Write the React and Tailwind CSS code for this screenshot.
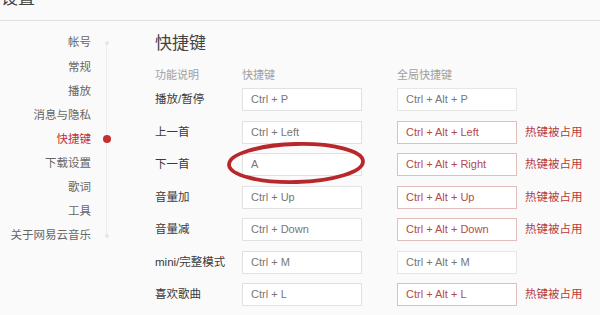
import React from 'react';

const navItems = ['帐号', '常规', '播放', '消息与隐私', '快捷键', '下载设置', '歌词', '工具', '关于网易云音乐'];

const rows = [
  { name: '播放/暂停', local: 'Ctrl + P', global: 'Ctrl + Alt + P', taken: false },
  { name: '上一首', local: 'Ctrl + Left', global: 'Ctrl + Alt + Left', taken: true },
  { name: '下一首', local: 'A', global: 'Ctrl + Alt + Right', taken: true, circled: true },
  { name: '音量加', local: 'Ctrl + Up', global: 'Ctrl + Alt + Up', taken: true },
  { name: '音量减', local: 'Ctrl + Down', global: 'Ctrl + Alt + Down', taken: true },
  { name: 'mini/完整模式', local: 'Ctrl + M', global: 'Ctrl + Alt + M', taken: false },
  { name: '喜欢歌曲', local: 'Ctrl + L', global: 'Ctrl + Alt + L', taken: true },
  { name: '', local: '', global: '', taken: false },
];

const font = { fontFamily: '"Liberation Sans", "Noto Sans CJK SC", sans-serif' };

export default function App() {
  return (
    <div className="w-[600px] h-[315px] overflow-hidden bg-[#fafafa] text-[#333]" style={font}>
      {/* Header */}
      <div className="h-[21px] border-b border-[#e1e1e1] overflow-hidden">
        <div className="text-[17px] leading-[20px] -mt-[11px] pl-[1px] text-[#444]">设置</div>
      </div>

      <div className="flex">
        {/* Nav */}
        <div className="relative pt-[10px] w-[155px] shrink-0">
          <div className="absolute left-[106px] top-[22px] h-[194px] w-px bg-[#ececec]"></div>
          {navItems.map((item, i) => (
            <div key={item} className="flex items-center h-[24.1px]">
              <span className={`w-[91px] text-right text-[11.5px] ${item === '快捷键' ? 'text-[#c62f2f]' : 'text-[#666]'}`}>
                {item}
              </span>
              <div className="w-[31px] flex justify-center">
                {item === '快捷键' ? (
                  <div className="relative w-[8px] h-[8px] rounded-full bg-[#c62f2f]"></div>
                ) : (i === 0 || i === navItems.length - 1) ? (
                  <div className="relative w-[4px] h-[4px] rounded-full bg-[#e6e6e6]"></div>
                ) : null}
              </div>
            </div>
          ))}
        </div>

        {/* Content */}
        <div className="pt-[11px]">
          <h2 className="text-[17px] leading-[24px] text-[#444]">快捷键</h2>
          <div className="flex mt-[11px] text-[11px] leading-[16px] text-[#a0a0a0]">
            <span className="w-[87px]">功能说明</span>
            <span className="w-[155px]">快捷键</span>
            <span>全局快捷键</span>
          </div>
          <div className="mt-[5px] flex flex-col">
            {rows.map((r, i) => (
              <div key={i} className="flex items-start h-[32.5px]">
                <span className="w-[87px] text-[11.5px] leading-[23px] text-[#3a3a3a]">{r.name}</span>
                <div className="relative">
                  <div className="w-[120px] h-[23px] bg-white border border-[#e1e1e1] pl-[8px] text-[11px] leading-[21px] text-[#777]">
                    {r.local}
                  </div>
                  {r.circled && (
                    <svg className="absolute -left-[16px] -top-[12px]" width="142" height="46" viewBox="0 0 142 46">
                      <ellipse cx="70" cy="22" rx="67" ry="19" fill="none" stroke="#b8272b" strokeWidth="3.8" transform="rotate(-1.5 70 22)" />
                    </svg>
                  )}
                </div>
                <div className={`ml-[35px] w-[120px] h-[23px] bg-white border pl-[8px] text-[11px] leading-[21px] ${r.taken ? 'border-[#e3bcbc] text-[#b54a4a]' : 'border-[#e6e6e6] text-[#777]'}`}>
                  {r.global}
                </div>
                {r.taken && (
                  <span className="ml-[8px] text-[11.5px] leading-[23px] text-[#b83a3a]">热键被占用</span>
                )}
              </div>
            ))}
          </div>
        </div>
      </div>
    </div>
  );
}
